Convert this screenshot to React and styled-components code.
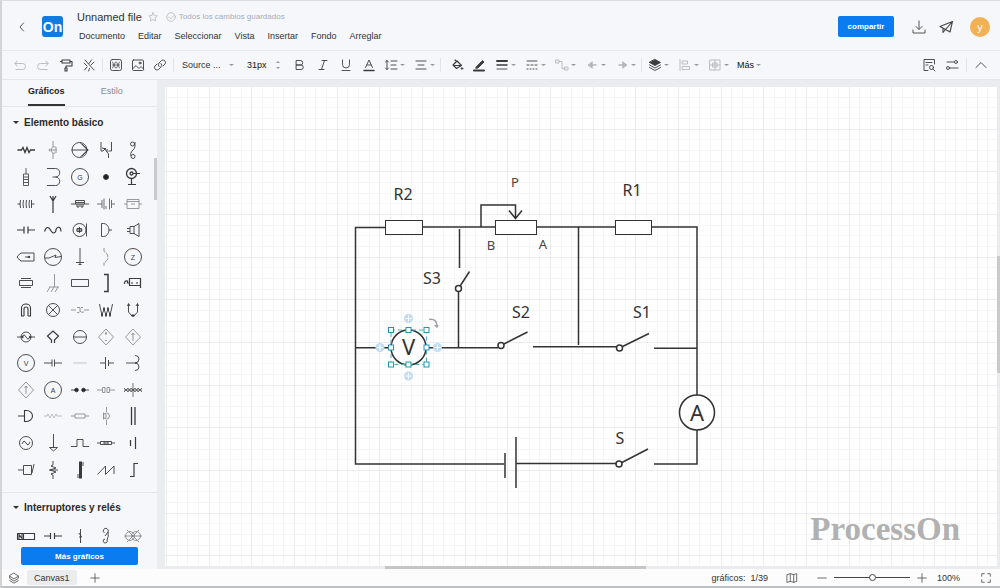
import { useState } from "react";
import styled, { createGlobalStyle } from "styled-components";

const basicShapes = [
  { name: "Resistencia", art: <path d="M1.5 10h4l1.5-2.5 2 5 2-5 2 5 1.5-2.5h4.5" strokeWidth="1.3" /> },
  { name: "Diodo", faint: true, art: <path d="M10 1v6M10 13v6M12.5 7q-4-1-4 3t4 3M13 7v6M6 10h8M7 8.5l-1 1.5 1 1.5" /> },
  { name: "Fuente", art: <><circle cx="9.5" cy="10" r="7.5" /><path d="M1.5 10h17M12 4l6 6-6 6M10 2.5l7.5 7.5-7.5 7.5" /></> },
  { name: "Transistor", art: <path d="M5 2v9h2M15.5 2v9h-3M6 8l4 1M7 11l3-3M11 9v3l1.5 2v4M8 8l3 4" /> },
  { name: "Bobina", art: <><circle cx="9.5" cy="4" r="2" /><circle cx="10" cy="16.5" r="2" /><path d="M12 2v4q0 3-3 5-2 2-1 5" /></> },
  { name: "Resistencia vertical", art: <path d="M10 1v6M7.5 7h5v11.5h-5zM7.5 10h5M7.5 12.5h5M7.5 15.5h5" strokeWidth="0.8" /> },
  { name: "Inductor", art: <path d="M4 1.5h8.5a4 4 0 0 1 0 8.5h-3M12.5 10a4 4 0 0 1 0 8.5H4" /> },
  { name: "Generador", letter: "G", art: <circle cx="10" cy="10" r="8.5" /> },
  { name: "Punto", art: <circle cx="10" cy="10" r="2.5" fill="#222" /> },
  { name: "Terminal", art: <><circle cx="8.5" cy="6.5" r="5" strokeWidth="1.3" /><circle cx="8.5" cy="6.5" r="1.5" strokeWidth="1.3" /><path d="M10 6.5h7M8.5 12v6M5 17.5h8" strokeWidth="1.2" /></> },
  { name: "Devanado", art: <path d="M1.5 10h3M15.5 10h3M4.5 6q-1 4 0 8M7.5 6q-1 4 0 8M10.5 6q-1 4 0 8M13.5 6q-1 4 0 8M15.5 6v8" /> },
  { name: "Antena", art: <path d="M10 2v17M7 2l3 5 3-5" strokeWidth="1.2" /> },
  { name: "Transformador", art: <path d="M1 10h18M5.5 10V6.5h9V10M5.5 8.5h9M7 10v3h2v-3M11 10v3h2v-3" /> },
  { name: "Par", art: <path d="M1 10h5M6 6v8M8 4.5v11M10 12v3M13.5 4.5v11M15.5 6v8M16 10h3" opacity="0.8" /> },
  { name: "Medidor", faint: true, art: <path d="M1 10h3M16 10h3M4 5.5h12v9H4zM4 7.5h12M8 10h4" /> },
  { name: "Capacitor", art: <path d="M1 10h7M8 6.5v7M12 6.5v7M12 10h7" strokeWidth="1.2" /> },
  { name: "Onda", art: <path d="M1.5 11.5q2-6 5-3 1.5 3 3.5 4.5 3 0 3-3.5 2-4 4.5-1l.5 3" strokeWidth="1.2" /> },
  { name: "Micrófono", art: <><circle cx="9.5" cy="10" r="6.5" /><path d="M16.5 3.5v13M6.5 10h6M9.5 7v6M7 8.5h4.5v3H7z" /></> },
  { name: "Zumbador", art: <path d="M5.5 3.5h2a5.5 6.5 0 0 1 0 13h-2zM13 10h3" /> },
  { name: "Altavoz", art: <path d="M7 6.5h4v7H7zM11 6.5l5-3v13l-5-3M4 8.5h3M4 11.5h3" /> },
  { name: "Conector", art: <><path d="M5 6h13v8H5l-3.5-3V9z" /><path d="M9 10h5" /><circle cx="13" cy="10" r="0.8" fill="#333" /></> },
  { name: "Interruptor térmico", art: <><circle cx="10" cy="10" r="8.5" /><path d="M2 11h4l7-3-1 2.5 6-1" /></> },
  { name: "Tierra", art: <path d="M10 1v17M6 15.5h8M8.5 17.5h3" /> },
  { name: "Arco", faint: true, art: <path d="M8 1v3.5l2 1q4 4.5 0 9l-2 1V19" strokeDasharray="5 1" /> },
  { name: "Impedancia", letter: "Z", art: <circle cx="10" cy="10" r="8.5" /> },
  { name: "Cristal", art: <path d="M5 5.5h10M3.5 7.5h13v5h-13zM5 14.5h10" /> },
  { name: "Masa", faint: true, art: <path d="M11.5 1v13M6 14h10M7 14l-3 5M11 14l-3 5M15 14l-3 5" /> },
  { name: "Rectángulo", art: <path d="M1.5 6.5h17v7h-17z" /> },
  { name: "Corchete", art: <path d="M8 1.5h4v17H8" strokeWidth="1.5" /> },
  { name: "Relé", art: <path d="M1.5 11q0-4 3-3v2h2M6.5 5.5h11v7h-11zM8 10h2M13 10h2M17.5 10v5" strokeWidth="1.2" /> },
  { name: "Arco doble", art: <path d="M8 16H5.5V8a4.5 4 0 0 1 9 0v8H12M8 16V9a2 2 0 0 1 4 0v7" strokeWidth="1.1" /> },
  { name: "Lámpara", art: <><circle cx="10" cy="10" r="6.5" /><path d="M5.5 5.5l9 9M14.5 5.5l-9 9" /></> },
  { name: "Filtro", faint: true, art: <path d="M1 10h5M7 7.5h3v4q-1 2-3 1M13 7.5h-2M10 11q1 2 4 1M14 10h5" /> },
  { name: "Bobinas", art: <><path d="M3.5 4l1 5 1.5 6 2-6 2 6 2-6 2 6 1.5-6 1-5" /><path d="M6 13.5v3M10 13.5v3M14 13.5v3M8 7.5v3M12 7.5v3" strokeWidth="1.8" /></> },
  { name: "Unión", art: <><path d="M5.5 4v8l3.5 4h2l3.5-4V4M4.5 6l1-2.5L7 6M13 6l1.5-2.5 1 2.5" /><path d="M8.5 15.5h3" strokeWidth="2" /></> },
  { name: "Fuente alterna", art: <><circle cx="10" cy="10" r="5" /><path d="M1 10h5q2-4 4 0t4 0h5" /><circle cx="6.5" cy="10" r="0.8" fill="#333" /><circle cx="14" cy="10" r="0.8" fill="#333" /></> },
  { name: "Salida", art: <path d="M8.5 16v-3L4.5 9 10 4l5.5 5-4 4v3" strokeWidth="1.2" /> },
  { name: "Circular", art: <><circle cx="10" cy="10" r="6.5" /><path d="M3.5 10h13" /></> },
  { name: "Fuente controlada", faint: true, art: <path d="M10 2l7.5 8-7.5 8-7.5-8zM10 5v3M9 6.5h2M9 13.5h2" /> },
  { name: "Corriente controlada", faint: true, art: <path d="M10 2l7.5 8-7.5 8-7.5-8zM10 6v8M8.5 8L10 6l1.5 2" /> },
  { name: "Voltímetro", letter: "V", art: <circle cx="10" cy="10" r="8.5" /> },
  { name: "Condensador", art: <path d="M1 10h8M9 6.5v7M11.5 6.5v7M12 10h7" /> },
  { name: "Línea", faint: true, art: <path d="M3 10h14" opacity="0.5" /> },
  { name: "Batería", art: <path d="M4 10h5M9.5 4v12M12.5 7v6M13 10h5" /> },
  { name: "Derivación", art: <path d="M3 10h10M12 2.5q4 0 4 3.5 0 4-4 4 4 0 4 4 0 3.5-4 3.5" /> },
  { name: "Rombo", faint: true, art: <path d="M10 2l7.5 8-7.5 8-7.5-8zM10 6v8M8.5 8L10 6l1.5 2" /> },
  { name: "Amperímetro", letter: "A", art: <circle cx="10" cy="10" r="8.5" /> },
  { name: "Contactos", art: <><path d="M1 10h4M15 10h4" /><circle cx="6.5" cy="10" r="1.8" fill="#222" /><circle cx="13.5" cy="10" r="1.8" fill="#222" /></> },
  { name: "Condensador doble", faint: true, art: <path d="M1 10h5M6.5 7.5H9v5H6.5zM11 7.5h2.5v5H11zM14 10h5" /> },
  { name: "Piezoeléctrico", art: <path d="M1 8l4 4 3-4 4 4 3-4 4 4M1 12l4-4 3 4 4-4 3 4 4-4M10 3v14M1 10h18" strokeWidth="0.7" /> },
  { name: "Puerta", art: <path d="M2 10h6M8.5 4.5h2a6 5.5 0 0 1 0 11h-2z" strokeWidth="1.1" /> },
  { name: "Resistencia fina", faint: true, art: <path d="M1 10h3l1-2 2 4 2-4 2 4 2-4 1 2h5" opacity="0.6" /> },
  { name: "Fusible", faint: true, art: <path d="M1 10h4M5 8h10v4H5zM15 10h4" /> },
  { name: "Bombilla", faint: true, art: <><path d="M10.5 1v5M10.5 14v5M7.5 6.5v7M10 8v4" /><circle cx="10.5" cy="10" r="3" /></> },
  { name: "Barras", art: <path d="M8.5 1v18M12 1v18" strokeWidth="1.3" /> },
  { name: "Generador alterno", art: <><circle cx="10" cy="10" r="6.5" /><path d="M6 11q2-5 4-1t4-1" /></> },
  { name: "Flecha", art: <path d="M10.5 1v14M6.5 14.5h8l-4 3.5z" /> },
  { name: "Pulso", art: <path d="M1 13.5h6v-7h6v7h6" /> },
  { name: "Fusible doble", art: <path d="M1 10h3M4.5 8.5h11v3h-11zM8 9v2M12 9v2M8 10h4M16 10h3" /> },
  { name: "Celda", art: <path d="M7.5 7v6M12.5 4v12" strokeWidth="1.2" /> },
  { name: "Bloque", art: <path d="M2 10h5M7.5 5.5h8v9h-8zM16 13l2-9" /> },
  { name: "Resistencia variable", art: <path d="M10 1v4l-2 1 5 2-6 2 6 2-5 2 2 1v4M6 10h9" /> },
  { name: "Barra", art: <><path d="M10.5 1.5v17" strokeWidth="3" /><path d="M8 18v-4M13 2v4" /></> },
  { name: "Diente de sierra", art: <path d="M1.5 14.5l8-8.5v8.5L18 6v8" /> },
  { name: "Escalón", art: <path d="M7 16.5h4v-13h4" strokeWidth="1.2" /> },
];

const relayShapes = [
  { name: "Bobina de relé", art: <path d="M1.5 7.5h17v6h-17zM7.5 7.5v6M3 13V8.5l3 4V8" strokeWidth="1.1" /> },
  { name: "Contacto", art: <path d="M1 10h6M7.5 7v6M11.5 7v6M12 10h7" strokeWidth="1.2" /> },
  { name: "Interruptor", art: <path d="M10.5 3v14M9 7l2.5 4H9" /> },
  { name: "Gancho", art: <path d="M8.5 7A2.5 2.5 0 1 1 12 6l-3 4M12 6q1 5-1 8a2 2 0 1 1-2-1" /> },
  { name: "Conmutador", faint: true, art: <><circle cx="7" cy="10" r="4.5" /><circle cx="13" cy="10" r="4.5" /><path d="M4 4l12 12M16 4L4 16M1 10h18" /></> },
];

const menus = ["Documento", "Editar", "Seleccionar", "Vista", "Insertar", "Fondo", "Arreglar"];

const Icon = ({ size = 14, children }) => (
  <svg
    width={size}
    height={size}
    viewBox="0 0 14 14"
    fill="none"
    stroke="currentColor"
    strokeWidth="0.9"
    strokeLinecap="round"
    strokeLinejoin="round"
    aria-hidden="true"
  >
    {children}
  </svg>
);

const Caret = () => (
  <svg width="5" height="4" viewBox="0 0 5 4" aria-hidden="true">
    <path d="M0 1h5L2.5 3z" fill="#999" />
  </svg>
);

const Tool = ({ label, faint, drop, children }) => (
  <ToolButton type="button" aria-label={label} $faint={faint}>
    <Icon>{children}</Icon>
    {drop && <Caret />}
  </ToolButton>
);

const ShapeGrid = ({ shapes }) => (
  <Shapes>
    {shapes.map((shape) => (
      <ShapeButton key={shape.name} type="button" aria-label={shape.name} $faint={shape.faint}>
        <svg width="20" height="20" viewBox="0 0 20 20" fill="none" stroke="currentColor" strokeWidth="0.9">
          {shape.art}
          {shape.letter && (
            <text x="10" y="12.5" textAnchor="middle" fontSize="7" fill="currentColor" stroke="none">
              {shape.letter}
            </text>
          )}
        </svg>
      </ShapeButton>
    ))}
  </Shapes>
);

const Switch = ({ x, y, dx, dy }) => (
  <>
    <line x1={x} y1={y} x2={x + dx} y2={y + dy} />
    <circle cx={x} cy={y} r="3" fill="#fff" />
  </>
);

const Circuit = () => (
  <g transform="translate(-165 -86)" fill="none" stroke="#333" strokeWidth="1.5">
    <path d="M385 227.5H355.5V464H504M422 227H495M536 227H615M651 227H697V395M697 430V464H654" />
    <path d="M459.5 229V268M458.5 291V347M355.5 347.7H391M427 347.7H498M578.5 227V345M533 346.8H617M654 348.3H697M516 463.5H616" />
    <path d="M505 453V478M516 437V488" />
    <path d="M481 227V205H515.5V218M509 210.5L515.5 218.5L522 210.5" />
    <g fill="#fff" strokeWidth="1">
      <rect x="385.5" y="220.5" width="37" height="14" />
      <rect x="495.5" y="220.5" width="41" height="14" />
      <rect x="615.5" y="220.5" width="36" height="14" />
    </g>
    <Switch x={458.5} y={288.5} dx={11} dy={-17} />
    <Switch x={501} y={345.5} dx={26.5} dy={-13.5} />
    <Switch x={619.5} y={348} dx={29.5} dy={-14.5} />
    <Switch x={619} y={464} dx={29} dy={-15} />
    <circle cx="408.5" cy="347.5" r="17.5" fill="#fff" />
    <circle cx="697" cy="412.5" r="17.5" fill="#fff" />
    <g fill="#333" stroke="none" textAnchor="middle" fontFamily="'Noto Sans', sans-serif">
      <g fontSize="16">
        <text x="403" y="200">R2</text>
        <text x="632" y="196">R1</text>
        <text x="432" y="284">S3</text>
        <text x="521" y="318">S2</text>
        <text x="642" y="318">S1</text>
        <text x="620" y="444">S</text>
      </g>
      <g fontSize="13" fill="#444">
        <text x="515" y="187">P</text>
        <text x="491" y="250">B</text>
        <text x="543" y="249">A</text>
      </g>
      <g fontSize="22">
        <text x="408.5" y="355">V</text>
        <text x="697" y="421">A</text>
      </g>
    </g>
  </g>
);

const handleRows = [330, 347.5, 364.5];
const handleColumns = [391, 408.5, 426.5];
const anchors = [[408.5, 318.5], [380, 347.5], [437.5, 347.5], [408.5, 376]];

const Selection = () => (
  <g transform="translate(-165 -86)">
    <rect x="391" y="330" width="35.5" height="34.5" fill="none" stroke="#5aa9c2" strokeDasharray="4 3" />
    {anchors.map(([x, y]) => (
      <g key={`${x}-${y}`}>
        <circle cx={x} cy={y} r="4.5" fill="#bfdcf2" />
        <path d={`M${x - 3} ${y}h6M${x} ${y - 3}v6`} stroke="#fff" />
      </g>
    ))}
    {handleRows.map((y) =>
      handleColumns
        .filter((x) => x !== 408.5 || y !== 347.5)
        .map((x) => (
          <rect key={`${x}-${y}`} x={x - 2.5} y={y - 2.5} width="5" height="5" fill="#fff" stroke="#2d8fae" />
        ))
    )}
    <path d="M429 319.5q8-1.5 8 7.5M434.5 325l2.5 2 1-2" fill="none" stroke="#a3a1aa" strokeWidth="1.5" />
  </g>
);

const minor = [11, 21, 32, 53, 64, 75, 96, 107, 117];
const major = [0, 43, 85];

const Board = () => (
  <BoardSvg role="img" aria-label="Circuito">
    <defs>
      <pattern id="grid" x="1" width="128" height="128" patternUnits="userSpaceOnUse">
        {minor.map((n) => (
          <path key={n} d={`M${n + 0.5} 0V128M0 ${n + 0.5}H128`} stroke="#f6f6f6" />
        ))}
        {major.map((n) => (
          <path key={n} d={`M${n + 0.5} 0V128M0 ${n + 0.5}H128`} stroke="#ececec" />
        ))}
      </pattern>
    </defs>
    <rect width="100%" height="100%" fill="url(#grid)" />
    <Circuit />
    <Selection />
  </BoardSvg>
);

const App = () => {
  const [tab, setTab] = useState("Gráficos");
  const [zoom, setZoom] = useState(100);

  return (
    <>
      <GlobalStyle />
      <Page>
        <Header>
          <IconButton type="button" aria-label="Volver">
            <Icon><path d="M8.5 3L5 7l3.5 4" /></Icon>
          </IconButton>
          <Logo>On</Logo>
          <FileInfo>
            <FileRow>
              <FileName>Unnamed file</FileName>
              <Status>
                <Icon size={10}><path d="M7 1l1.8 3.9 4.2.5-3.1 2.9.8 4.2L7 10.4l-3.7 2.1.8-4.2L1 5.4l4.2-.5z" /></Icon>
                <Saved>
                  <Icon size={10}><circle cx="7" cy="7" r="6" /><path d="M4 7l2.5 2.5L11 5" /></Icon>
                  Todos los cambios guardados
                </Saved>
              </Status>
            </FileRow>
            <Menu>
              {menus.map((item) => (
                <button key={item} type="button">{item}</button>
              ))}
            </Menu>
          </FileInfo>
          <HeaderActions>
            <ShareButton type="button">compartir</ShareButton>
            <IconButton type="button" aria-label="Descargar">
              <Icon><path d="M7 1v8M4 6.5l3 3 3-3M1 10v3h12v-3" /></Icon>
            </IconButton>
            <IconButton type="button" aria-label="Enviar">
              <Icon><path d="M1 6.5l12.5-5L11 12 6.5 9.5zM6.5 9.5l7-8M4 8v4.5l2.5-3" strokeWidth="1.1" /></Icon>
            </IconButton>
            <Avatar type="button" aria-label="Cuenta">y</Avatar>
          </HeaderActions>
        </Header>

        <Toolbar>
          <ToolGroup $gap={1}>
            <Tool label="Deshacer" faint><path d="M4 3L2 5.5 4 8M2 5.5h7.5a2.5 2.5 0 0 1 0 6H3" /></Tool>
            <Tool label="Rehacer" faint><path d="M10 3l2 2.5L10 8M12 5.5H4.5a2.5 2.5 0 0 0 0 6H11" /></Tool>
            <Tool label="Copiar formato"><path d="M3 2h8v3H3zM11 3.5h2V8H7v2M6 10h2v3H6zM3 3.5H1.5" strokeWidth="1.1" /></Tool>
            <Tool label="Embellecer"><path d="M3 2l9 10M2 5l3 3M9.5 2L7 5.5M12 4L9 7M5 9l-2.5 3M7.5 10.5l-1 2.5" /></Tool>
          </ToolGroup>
          <Divider />
          <ToolGroup>
            <Tool label="Gráfico"><rect x="1.5" y="1.5" width="11" height="11" rx="2" /><path d="M3.5 4l3 6M6.5 4l-3 6M7.5 4l3 6M10.5 4l-3 6M3.5 7h7" strokeWidth="0.7" /></Tool>
            <Tool label="Imagen"><rect x="1.5" y="2" width="11" height="10.5" rx="1" /><path d="M2 10.5l3-3 3 3 2-2 2.5 2.5" /><circle cx="9" cy="5" r="1" /></Tool>
            <Tool label="Enlace"><path d="M6 8.5A2.5 2.5 0 0 1 6 5l2.5-2.5A2.5 2.5 0 0 1 12 6l-2 2M8 5.5A2.5 2.5 0 0 1 8 9l-2.5 2.5A2.5 2.5 0 0 1 2 8l2-2" /></Tool>
          </ToolGroup>
          <Divider />
          <FontField>
            <select aria-label="Fuente" defaultValue="Source ...">
              <option>Source ...</option>
            </select>
            <Caret />
          </FontField>
          <SizeField>
            <input aria-label="Tamaño" defaultValue="31px" />
            <svg width="6" height="10" viewBox="0 0 6 10" fill="#999" aria-hidden="true">
              <path d="M1 3h4L3 1zM1 7h4L3 9z" />
            </svg>
          </SizeField>
          <ToolGroup $gap={1}>
            <Tool label="Negrita"><path d="M3.5 2.5h4a2.2 2.2 0 0 1 0 4.5h-4zM3.5 7H8a2.2 2.2 0 0 1 0 4.5H3.5z" /></Tool>
            <Tool label="Cursiva"><path d="M6 2.5h5M3 11.5h5M8.5 2.5l-3 9" /></Tool>
            <Tool label="Subrayado"><path d="M3.5 2v4.5a3.5 3.5 0 0 0 7 0V2M3 12.5h8" /></Tool>
            <Tool label="Color de texto"><path d="M3.5 9.5L7 2l3.5 7.5M5 7h4" /><path d="M2 12.5h10" strokeWidth="1.5" /></Tool>
          </ToolGroup>
          <ToolGroup $gap={8} $lead={3}>
            <Tool label="Interlineado" drop><path d="M3 2.5v9M1.5 4L3 2.5 4.5 4M1.5 10L3 11.5 4.5 10M7 3h6M7 7h5M7 11h6" /></Tool>
            <Tool label="Alineación" drop><path d="M2 3h10M4 7h6M2 11h10" /></Tool>
          </ToolGroup>
          <Divider $wide />
          <ToolGroup>
            <Tool label="Relleno"><path d="M3 7l4-4 4.5 4.5-5 3zM5 2l2 1.5M3.5 7.5h7" strokeWidth="1.2" /><circle cx="12" cy="10.5" r="0.8" fill="currentColor" /></Tool>
            <Tool label="Color de línea"><path d="M4.5 8.5l6-6L12 4l-6 6-2 .3z" fill="currentColor" /><path d="M2 12.5h10" strokeWidth="2" /></Tool>
          </ToolGroup>
          <ToolGroup $gap={8} $lead={4}>
            <Tool label="Grosor" drop><path d="M2 3h10" strokeWidth="2" /><path d="M2 7h10" strokeWidth="1.5" /><path d="M2 11h10" /></Tool>
            <Tool label="Estilo de línea" drop><path d="M2 3h10" /><path d="M2 7h10" strokeDasharray="2 2" /><path d="M2 11h10" strokeDasharray="1 2" /></Tool>
            <Tool label="Conector" faint drop><path d="M1 2h3v3H1zM4 3.5h3v7h3M10 9h3v3h-3z" /></Tool>
            <Tool label="Inicio de línea" faint drop><path d="M7 4L3 7l4 3z" fill="currentColor" /><path d="M7 7h4" strokeWidth="1.5" /></Tool>
            <Tool label="Fin de línea" faint drop><path d="M8 4l4 3-4 3z" fill="currentColor" /><path d="M4 7h4" strokeWidth="1.5" /></Tool>
          </ToolGroup>
          <Divider $wide />
          <ToolGroup $gap={8}>
            <Tool label="Capas" drop><path d="M7 1.5l5.5 3-5.5 3-5.5-3z" fill="currentColor" /><path d="M1.5 7L7 10l5.5-3M1.5 9.5l5.5 3 5.5-3" /></Tool>
            <Tool label="Alinear" faint drop><path d="M2 1.5v11M4.5 3h5v3h-5zM4.5 8.5h7v3h-7z" /></Tool>
            <Tool label="Distribuir" faint drop><path d="M2 2h10v10H2zM7 2v10M2 7h10M5 5h4v4H5z" /></Tool>
            <MoreButton type="button">Más <Caret /></MoreButton>
          </ToolGroup>
          <ToolbarEnd>
            <Tool label="Buscar"><path d="M6 12.5H2v-11h10.5V6M4 4.5h6M4 7h2" /><circle cx="9.5" cy="9.5" r="2" /><path d="M11 11l2 2" /></Tool>
            <Tool label="Ajustes"><path d="M2 4h7M5 10h8" /><circle cx="11" cy="4" r="1.5" /><circle cx="3" cy="10" r="1.5" /></Tool>
            <Divider />
            <Tool label="Contraer"><path d="M2 9.5l5-5 5 5" /></Tool>
          </ToolbarEnd>
        </Toolbar>

        <Body>
          <Sidebar>
            <Tabs role="tablist">
              {["Gráficos", "Estilo"].map((name) => (
                <Tab
                  key={name}
                  type="button"
                  role="tab"
                  aria-selected={tab === name}
                  $active={tab === name}
                  onClick={() => setTab(name)}
                >
                  <span>{name}</span>
                </Tab>
              ))}
            </Tabs>
            <Library>
              <SectionTitle type="button"><SectionArrow />Elemento básico</SectionTitle>
              <ShapeGrid shapes={basicShapes} />
              <Rule />
              <SectionTitle type="button"><SectionArrow />Interruptores y relés</SectionTitle>
              <ShapeGrid shapes={relayShapes} />
              <SideThumb />
            </Library>
            <MoreShapes type="button">Más gráficos</MoreShapes>
          </Sidebar>
          <Canvas>
            <Board />
            <Watermark>ProcessOn</Watermark>
            <VerticalThumb />
            <HorizontalThumb />
          </Canvas>
        </Body>

        <Footer>
          <IconButton type="button" aria-label="Capas del lienzo">
            <Icon size={12}><path d="M7 1.5l5 3v3l-5 3-5-3v-3zM2 5l5 3 5-3M2 10l5 3 5-3" /></Icon>
          </IconButton>
          <CanvasTab type="button">Canvas1</CanvasTab>
          <IconButton type="button" aria-label="Añadir lienzo">
            <Icon size={12}><path d="M7 2v10M2 7h10" /></Icon>
          </IconButton>
          <FooterEnd>
            <Count>gráficos:&nbsp; 1/39</Count>
            <IconButton type="button" aria-label="Mapa">
              <Icon size={12}><path d="M1.5 3L5 2l4 1 3.5-1v9L9 12l-4-1-3.5 1zM5 2v9M9 3v9" /></Icon>
            </IconButton>
            <ZoomControls>
              <IconButton type="button" aria-label="Alejar" onClick={() => setZoom(zoom - 10)}>
                <Icon size={12}><path d="M2 7h10" /></Icon>
              </IconButton>
              <ZoomRange
                type="range"
                aria-label="Zoom"
                min="10"
                max="190"
                value={zoom}
                onChange={(e) => setZoom(Number(e.target.value))}
              />
              <IconButton type="button" aria-label="Acercar" onClick={() => setZoom(zoom + 10)}>
                <Icon size={12}><path d="M7 2v10M2 7h10" /></Icon>
              </IconButton>
            </ZoomControls>
            <ZoomValue>{zoom}%</ZoomValue>
            <IconButton type="button" aria-label="Pantalla completa">
              <Icon size={12}><path d="M2 5V2h3M9 2h3v3M12 9v3H9M5 12H2V9" /></Icon>
            </IconButton>
          </FooterEnd>
        </Footer>
      </Page>
    </>
  );
};

const GlobalStyle = createGlobalStyle`
  * {
    box-sizing: border-box;
  }

  body {
    margin: 0;
    font-family: "Liberation Sans", Arial, sans-serif;
    font-size: 9px;
    color: #333;
  }

  button, input, select {
    margin: 0;
    padding: 0;
    border: 0;
    background: none;
    font: inherit;
    color: inherit;
  }

  button {
    cursor: pointer;
  }

  svg {
    display: block;
    flex-shrink: 0;
  }
`;

const Page = styled.div`
  display: flex;
  flex-direction: column;
  height: 100vh;
  border-top: 1px solid #dcdde0;
  border-left: 2px solid #d3d4d8;
  border-bottom: 2px solid #c0c1c3;
  background: #f5f7fa;
`;

const Header = styled.header`
  display: flex;
  align-items: center;
  height: 50px;
  padding: 2px 10px 0 12px;
  border-bottom: 1px solid #e6e8eb;
`;

const IconButton = styled.button`
  display: flex;
  align-items: center;
  justify-content: center;
  width: 16px;
  height: 16px;
  color: #444;
`;

const Logo = styled.div`
  width: 21px;
  height: 21px;
  margin-left: 12px;
  border-radius: 3px;
  background: #127be0;
  color: #fff;
  font-size: 14px;
  font-weight: 700;
  line-height: 22px;
  text-align: center;
`;

const FileInfo = styled.div`
  display: flex;
  flex-direction: column;
  gap: 5px;
  margin-left: 14px;
`;

const FileRow = styled.div`
  display: flex;
  align-items: center;
  height: 14px;
`;

const FileName = styled.h1`
  margin: 0;
  font-size: 11px;
  font-weight: 400;
  line-height: 14px;
`;

const Status = styled.div`
  display: flex;
  align-items: center;
  gap: 8px;
  margin-left: 6px;
  color: #a9abb8;
`;

const Saved = styled.span`
  display: flex;
  align-items: center;
  gap: 3px;
  font-size: 8px;
  line-height: 12px;
`;

const Menu = styled.nav`
  display: flex;
  gap: 13px;
  padding-left: 2px;

  button {
    line-height: 14px;
  }
`;

const HeaderActions = styled.div`
  display: flex;
  align-items: center;
  gap: 11px;
  margin-left: auto;
`;

const ShareButton = styled.button`
  width: 56px;
  height: 21px;
  margin-right: 6px;
  border-radius: 2px;
  background: #0b7bf0;
  color: #fff;
  font-size: 8px;
  font-weight: 700;
`;

const Avatar = styled.button`
  width: 20px;
  height: 20px;
  margin-left: 5px;
  border-radius: 50%;
  background: #f2b155;
  color: #fff;
  font-size: 11px;
`;

const Toolbar = styled.div`
  display: flex;
  align-items: center;
  height: 29px;
  padding: 0 8px 0 7px;
  border-bottom: 1px solid #e3e5e8;
`;

const ToolGroup = styled.div`
  display: flex;
  align-items: center;
  gap: ${({ $gap = 0 }) => $gap}px;
  margin-left: ${({ $lead = 0 }) => $lead}px;
`;

const ToolButton = styled.button`
  display: flex;
  align-items: center;
  justify-content: center;
  gap: 2px;
  width: 22px;
  height: 20px;
  color: ${({ $faint }) => ($faint ? "#b5b7bb" : "#3c3c3c")};
`;

const Divider = styled.span`
  width: 1px;
  height: 14px;
  margin: 0 ${({ $wide }) => ($wide ? 5 : 2)}px;
  background: #e2e4e7;
`;

const FontField = styled.label`
  display: flex;
  align-items: center;
  width: 59px;
  padding-left: 6px;

  select {
    width: 47px;
    appearance: none;
  }
`;

const SizeField = styled.label`
  display: flex;
  align-items: center;
  width: 54px;
  padding-left: 12px;

  input {
    width: 28px;
    color: #111;
  }
`;

const MoreButton = styled.button`
  display: flex;
  align-items: center;
  gap: 2px;
  color: #111;
`;

const ToolbarEnd = styled.div`
  display: flex;
  align-items: center;
  gap: 1px;
  margin-left: auto;
`;

const Body = styled.main`
  display: flex;
  flex: 1;
  min-height: 0;
  background: #ebecef;
`;

const Sidebar = styled.aside`
  display: flex;
  flex-direction: column;
  width: 155px;
  background: #f5f7fa;
`;

const Tabs = styled.div`
  display: flex;
  justify-content: space-around;
  height: 27px;
  padding: 0 16px 0 8px;
  border-bottom: 1px solid #e4e6e9;
`;

const Tab = styled.button`
  display: flex;
  color: ${({ $active }) => ($active ? "#222" : "#8a8c94")};
  font-weight: ${({ $active }) => ($active ? 700 : 400)};

  span {
    height: 26px;
    line-height: 22px;
    border-bottom: 2px solid ${({ $active }) => ($active ? "#333" : "transparent")};
  }
`;

const Library = styled.div`
  position: relative;
  flex: 1;
  min-height: 0;
  overflow: hidden;
`;

const SectionTitle = styled.button`
  display: flex;
  align-items: center;
  gap: 5px;
  height: 30px;
  padding-left: 11px;
  font-size: 10px;
  font-weight: 700;
  color: #2a2a2a;
`;

const SectionArrow = styled.span`
  border: 3px solid transparent;
  border-top-color: #333;
  border-bottom-width: 0;
`;

const Shapes = styled.div`
  display: grid;
  grid-template-columns: repeat(5, 1fr);
  margin: 0 11px;
`;

const ShapeButton = styled.button`
  display: flex;
  align-items: center;
  justify-content: center;
  aspect-ratio: 1;
  color: ${({ $faint }) => ($faint ? "#8b8d90" : "#3a3a3a")};
`;

const Rule = styled.hr`
  margin: 9px 0 0;
  border: 0;
  border-top: 1px solid #e4e6e9;
`;

const MoreShapes = styled.button`
  height: 18px;
  margin: 1px 19px 4px;
  border-radius: 2px;
  background: #0b7bf0;
  color: #fff;
  font-size: 8px;
  font-weight: 700;
`;

const SideThumb = styled.span`
  position: absolute;
  top: 51px;
  right: 0;
  width: 3px;
  height: 42px;
  background: #c9cacc;
`;

const Canvas = styled.section`
  position: relative;
  flex: 1;
  min-width: 0;
  padding: 6px 3px 3px 8px;
`;

const BoardSvg = styled.svg`
  width: 100%;
  height: 100%;
  background: #fff;
`;

const Watermark = styled.span`
  position: absolute;
  right: 40px;
  bottom: 21px;
  font-family: "Liberation Serif", serif;
  font-size: 33px;
  font-weight: 700;
  line-height: 38px;
  color: #b1b1b1;
`;

const VerticalThumb = styled.span`
  position: absolute;
  top: 36%;
  right: 0;
  width: 3px;
  height: 24%;
  background: #c9cacc;
`;

const HorizontalThumb = styled.span`
  position: absolute;
  left: 27%;
  bottom: 0;
  width: 31%;
  height: 3px;
  background: #c6c6c6;
`;

const Footer = styled.footer`
  display: flex;
  align-items: center;
  height: 17px;
  padding: 0 6px 0 4px;
  background: #fcfcfd;
`;

const CanvasTab = styled.button`
  height: 15px;
  margin: 0 10px 0 5px;
  padding: 0 7px;
  border-radius: 2px;
  background: #ebecee;
`;

const FooterEnd = styled.div`
  display: flex;
  align-items: center;
  margin-left: auto;
`;

const Count = styled.span`
  margin-right: 16px;
`;

const ZoomControls = styled.div`
  display: flex;
  align-items: center;
  gap: 4px;
  margin: 0 7px 0 14px;
`;

const ZoomRange = styled.input`
  width: 76px;
  height: 10px;
  margin: 0;
  appearance: none;
  background: linear-gradient(#444, #444) center / 100% 1px no-repeat;

  &::-webkit-slider-thumb {
    appearance: none;
    width: 7px;
    height: 7px;
    border: 1px solid #444;
    border-radius: 50%;
    background: #fff;
  }
`;

const ZoomValue = styled.span`
  width: 41px;
`;

export default App;
